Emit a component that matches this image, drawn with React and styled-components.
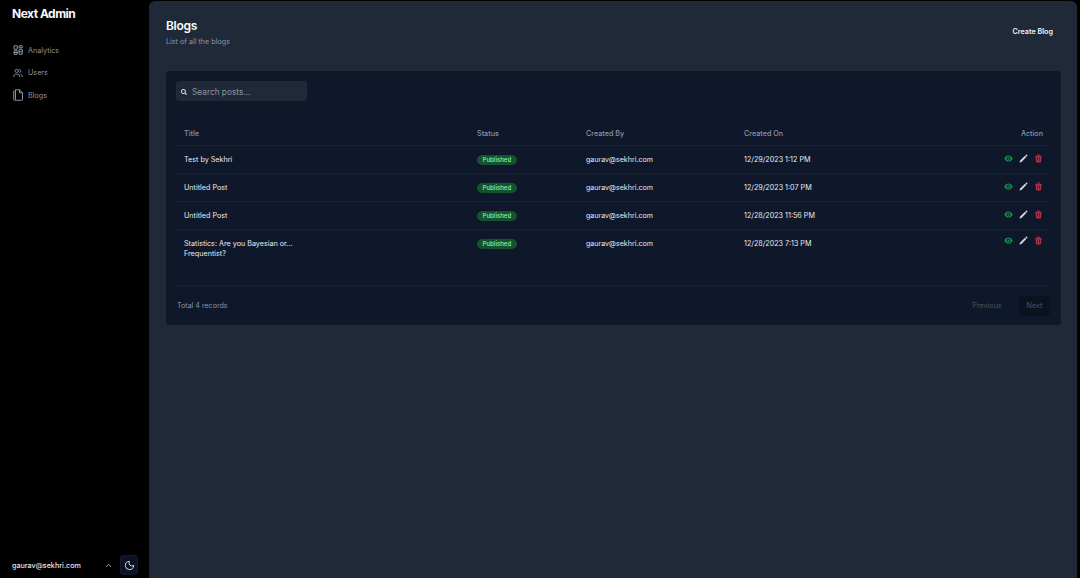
import React from 'react';
import styled, { createGlobalStyle } from 'styled-components';
import { Users, ChevronUp, Moon } from 'lucide-react';
import { HiEye, HiPencil, HiTrash } from 'react-icons/hi2';
import { FaSearch } from 'react-icons/fa';

const GlobalStyle = createGlobalStyle`
  html, body {
    margin: 0;
    height: 100%;
    background: #000;
    font-family: Inter, "Liberation Sans", sans-serif;
    overflow: hidden;
  }
  #root {
    height: 100%;
  }
  * {
    box-sizing: border-box;
  }
`;

const Shell = styled.div`
  display: flex;
  height: 578px;
  width: 1080px;
`;

const Sidebar = styled.aside`
  width: 149px;
  flex: none;
  display: flex;
  flex-direction: column;
  background: #000;
  padding: 7px 11px 0 12px;
`;

const Logo = styled.div`
  font-size: 12px;
  line-height: 14px;
  font-weight: 700;
  letter-spacing: -0.5px;
  color: #f8fafc;
`;

const Nav = styled.nav`
  display: flex;
  flex-direction: column;
  margin-top: 21px;
  gap: 6.5px;
  flex: 1;
`;

const NavItem = styled.a`
  display: flex;
  align-items: center;
  gap: 5px;
  height: 16px;
  padding-left: 1px;
  font-size: 7.2px;
  color: #8b95a5;
`;

const UserRow = styled.div`
  display: flex;
  align-items: center;
  height: 20px;
  margin-bottom: 3px;
`;

const UserEmail = styled.div`
  flex: 1;
  font-size: 7.2px;
  font-weight: 500;
  color: #e2e8f0;
`;

const ChevronWrap = styled.span`
  display: flex;
  color: #cbd5e1;
  margin-right: 7px;
`;

const ThemeButton = styled.button`
  width: 18px;
  height: 20px;
  display: flex;
  align-items: center;
  justify-content: center;
  padding: 0;
  border: 1px solid #101a30;
  border-radius: 3px;
  background: #0b1222;
  color: #e2e8f0;
`;

const Main = styled.main`
  flex: 1;
  margin: 1px 3px 0 0;
  background: #1f2937;
  border-radius: 6px 6px 0 0;
  padding: 17px 16px 0 17px;
`;

const Header = styled.header`
  display: flex;
  justify-content: space-between;
  align-items: flex-start;
  height: 53px;
`;

const PageTitle = styled.h1`
  margin: 0;
  font-size: 12px;
  line-height: 16px;
  font-weight: 600;
  letter-spacing: -0.3px;
  color: #f8fafc;
`;

const PageSub = styled.p`
  margin: 2px 0 0;
  font-size: 7.2px;
  line-height: 12px;
  color: #8b95a5;
`;

const CreateButton = styled.button`
  margin: 8px 8px 0 0;
  padding: 0;
  border: 0;
  background: none;
  font-family: inherit;
  font-size: 7.2px;
  line-height: 12px;
  font-weight: 600;
  color: #f1f5f9;
`;

const Card = styled.section`
  height: 254px;
  background: #0f172a;
  border-radius: 4px;
  padding: 10px 10px 0;
`;

const SearchBox = styled.div`
  display: flex;
  align-items: center;
  gap: 5px;
  width: 131px;
  height: 20px;
  padding: 1px 0 0 5px;
  border-radius: 3px;
  background: #1f2937;
  color: #e2e8f0;
`;

const SearchText = styled.span`
  font-size: 8.3px;
  color: #8b95a5;
`;

const Table = styled.table`
  width: 100%;
  margin-top: 19px;
  border-collapse: collapse;
  table-layout: fixed;
`;

const Th = styled.th`
  height: 25px;
  padding: 2px 8px 0;
  font-size: 7.2px;
  font-weight: 500;
  color: #8b95a5;
  text-align: ${props => props.$right ? 'right' : 'left'};
  width: ${props => props.$width || 'auto'};
`;

const Tr = styled.tr`
  border-top: 1px solid #18222f;
  height: ${props => props.$tall ? '56px' : '28px'};
`;

const Td = styled.td`
  padding: ${props => props.$top ? '9px 8px 0' : '1px 8px 0'};
  font-size: 7.2px;
  line-height: 10px;
  color: #e8edf3;
  vertical-align: ${props => props.$top ? 'top' : 'middle'};
`;

const TitleText = styled.div`
  max-width: 116px;
`;

const EmailText = styled.span`
  font-size: 7.1px;
`;

const Badge = styled.span`
  display: inline-block;
  padding: 0 5.5px;
  height: 10px;
  line-height: 10px;
  border-radius: 5px;
  background: #14532d;
  color: #86efac;
  font-size: 6.1px;
  font-weight: 500;
`;

const Actions = styled.div`
  display: flex;
  justify-content: flex-end;
  align-items: center;
  gap: 6px;
  margin-top: -3px;
`;

const Footer = styled.footer`
  display: flex;
  justify-content: space-between;
  align-items: center;
  height: 40px;
  padding: 0 1px;
  border-top: 1px solid #18222f;
`;

const Total = styled.div`
  font-size: 7.1px;
  color: #8b95a5;
`;

const Pager = styled.div`
  display: flex;
  gap: 12px;
`;

const PageButton = styled.button`
  width: ${props => props.$width}px;
  height: 20px;
  padding: 0;
  border: 0;
  border-radius: 3px;
  font-family: inherit;
  font-size: 7.2px;
  color: #4b5565;
  background: ${props => props.$filled ? '#0b1220' : 'transparent'};
`;

const AnalyticsIcon = () => (
  <svg width="10" height="10" viewBox="0 0 20 20" fill="none" stroke="currentColor" strokeWidth="2">
    <rect x="2" y="1.5" width="6.5" height="7" rx="0.5" />
    <rect x="12" y="1.5" width="6.5" height="4" rx="0.5" />
    <rect x="2" y="11.5" width="6.5" height="7" rx="0.5" />
    <rect x="12" y="8.5" width="6.5" height="10" rx="0.5" />
    <path d="M12 13.5h6.5M2 15h6.5" />
  </svg>
);

const BlogsIcon = () => (
  <svg width="10" height="12" viewBox="0 0 20 24" fill="none" stroke="currentColor" strokeWidth="2" strokeLinejoin="round">
    <path d="M3 4H1.5V21a2 2 0 0 0 2 2H5" />
    <path d="M5 1.5h8l6 6V21a1.5 1.5 0 0 1-1.5 1.5H6.5A1.5 1.5 0 0 1 5 21Z" />
    <path d="M13 1.5v6h6" />
  </svg>
);

const blogs = [
  { id: 1, title: 'Test by Sekhri', date: '12/29/2023 1:12 PM' },
  { id: 2, title: 'Untitled Post', date: '12/29/2023 1:07 PM' },
  { id: 3, title: 'Untitled Post', date: '12/28/2023 11:56 PM' },
  { id: 4, title: 'Statistics: Are you Bayesian or... Frequentist?', date: '12/28/2023 7:13 PM', tall: true },
];

const App = () => (
  <>
    <GlobalStyle />
    <Shell>
      <Sidebar>
        <Logo>Next Admin</Logo>
        <Nav>
          <NavItem><AnalyticsIcon />Analytics</NavItem>
          <NavItem><Users size={10} />Users</NavItem>
          <NavItem><BlogsIcon />Blogs</NavItem>
        </Nav>
        <UserRow>
          <UserEmail>gaurav@sekhri.com</UserEmail>
          <ChevronWrap><ChevronUp size={9} /></ChevronWrap>
          <ThemeButton><Moon size={11} /></ThemeButton>
        </UserRow>
      </Sidebar>
      <Main>
        <Header>
          <div>
            <PageTitle>Blogs</PageTitle>
            <PageSub>List of all the blogs</PageSub>
          </div>
          <CreateButton>Create Blog</CreateButton>
        </Header>
        <Card>
          <SearchBox>
            <FaSearch size={6} />
            <SearchText>Search posts...</SearchText>
          </SearchBox>
          <Table>
            <thead>
              <tr>
                <Th $width="293px">Title</Th>
                <Th $width="109px">Status</Th>
                <Th $width="158px">Created By</Th>
                <Th $width="150px">Created On</Th>
                <Th $right>Action</Th>
              </tr>
            </thead>
            <tbody>
              {blogs.map(blog => (
                <Tr key={blog.id} $tall={blog.tall}>
                  <Td $top={blog.tall}>
                    <TitleText>{blog.title}</TitleText>
                  </Td>
                  <Td $top={blog.tall}><Badge>Published</Badge></Td>
                  <Td $top={blog.tall}><EmailText>gaurav@sekhri.com</EmailText></Td>
                  <Td $top={blog.tall}>{blog.date}</Td>
                  <Td $top={blog.tall}>
                    <Actions>
                      <HiEye size={9} color="#1c8a4c" />
                      <HiPencil size={9} color="#cbd5e1" />
                      <HiTrash size={9} color="#a83246" />
                    </Actions>
                  </Td>
                </Tr>
              ))}
            </tbody>
          </Table>
          <Footer>
            <Total>Total 4 records</Total>
            <Pager>
              <PageButton $width={40}>Previous</PageButton>
              <PageButton $width={31} $filled>Next</PageButton>
            </Pager>
          </Footer>
        </Card>
      </Main>
    </Shell>
  </>
);

export default App;
